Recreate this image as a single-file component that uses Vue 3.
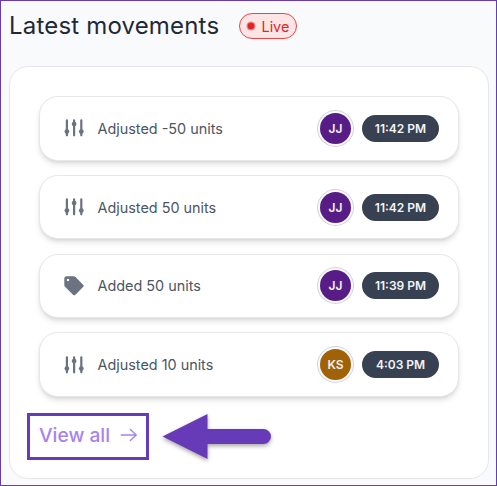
<template>
  <div class="dashboard">
    <header class="heading">
      <h1>Latest movements</h1>
      <span class="live">
        <svg width="10" height="10" viewBox="0 0 10 10">
          <circle cx="5" cy="5" r="4.6" fill="#dc2626" fill-opacity="0.5" />
          <circle cx="5" cy="5" r="3.3" fill="#dc2626" />
        </svg>
        <span>Live</span>
      </span>
    </header>

    <section class="card">
      <ul class="movements">
        <li v-for="movement in movements" :key="movement.id" class="movement">
          <svg v-if="movement.type === 'adjusted'" class="icon" viewBox="0 0 20 20">
            <g fill="none" stroke="#6b7280" stroke-width="2.2" stroke-linecap="round">
              <path d="M2.9 2.3V17.3M10.1 2.3V17.3M17.3 2.3V17.3" />
            </g>
            <g fill="#6b7280">
              <circle cx="2.9" cy="13.6" r="2.4" />
              <circle cx="10.1" cy="6.1" r="2.4" />
              <circle cx="17.3" cy="13.6" r="2.4" />
            </g>
          </svg>
          <svg v-else class="icon" viewBox="0 0 20 20">
            <path
              fill="#6b7280"
              fill-rule="evenodd"
              d="M2.8 0.3H9.8Q10.8 0.3 11.5 1L19.3 8.9Q20.2 9.8 19.3 10.8L11.2 18.9Q10.2 19.8 9.3 18.9L1 10.8Q0.3 10.1 0.3 9.1V2.8Q0.3 0.3 2.8 0.3ZM4 2.8A1.25 1.25 0 1 0 4 5.3A1.25 1.25 0 1 0 4 2.8Z"
            />
          </svg>
          <span class="label">{{ movement.label }}</span>
          <span class="avatar" :style="{ backgroundColor: movement.color }">{{ movement.initials }}</span>
          <span class="time">{{ movement.time }}</span>
        </li>
      </ul>

      <div class="footer">
        <a class="view-all">
          <span>View all</span>
          <svg width="18" height="16" viewBox="0 0 18 16">
            <path
              d="M1.2 8H16.3M10.3 2.5L16.3 8L10.3 13.5"
              fill="none"
              stroke="#a683ee"
              stroke-width="1.4"
              stroke-linecap="round"
              stroke-linejoin="round"
            />
          </svg>
        </a>
        <svg class="pointer" width="110" height="47" viewBox="0 0 110 47">
          <path d="M0.5 23.5L45.5 1V16H101.5A7.5 7.5 0 0 1 101.5 31H45.5V46Z" fill="#673ab7" />
        </svg>
      </div>
    </section>
  </div>
</template>

<script setup>
const movements = [
  { id: 1, type: 'adjusted', label: 'Adjusted -50 units', initials: 'JJ', color: '#581c87', time: '11:42 PM' },
  { id: 2, type: 'adjusted', label: 'Adjusted 50 units', initials: 'JJ', color: '#581c87', time: '11:42 PM' },
  { id: 3, type: 'added', label: 'Added 50 units', initials: 'JJ', color: '#581c87', time: '11:39 PM' },
  { id: 4, type: 'adjusted', label: 'Adjusted 10 units', initials: 'KS', color: '#a16207', time: '4:03 PM' }
]
</script>

<style>
body {
  margin: 0;
}
</style>

<style scoped>
.dashboard {
  box-sizing: border-box;
  width: 497px;
  height: 486px;
  padding: 0 7px 0 8px;
  border: 1px solid #673ab7;
  background: #f9fafb;
  font-family: Inter, "Liberation Sans", sans-serif;
  overflow: hidden;
}

.heading {
  display: flex;
  align-items: center;
  height: 50px;
}

h1 {
  width: 230px;
  margin: 0;
  color: #1f2937;
  font-size: 24px;
  font-weight: 400;
  letter-spacing: 0.18px;
  line-height: 32px;
  white-space: nowrap;
}

.live {
  box-sizing: border-box;
  display: flex;
  align-items: center;
  gap: 6px;
  width: 58px;
  height: 26px;
  padding-left: 5.5px;
  border: 1px solid #ef4444;
  border-radius: 13px;
  background: #fee5e5;
  color: #dc2626;
  font-size: 14.4px;
}

.card {
  box-sizing: border-box;
  height: 413px;
  margin-top: 15px;
  padding: 29.3px 29px 0;
  border: 1px solid #e5e7eb;
  border-radius: 19px;
  background: #fff;
}

.movements {
  display: flex;
  flex-direction: column;
  gap: 14.4px;
  margin: 0;
  padding: 0;
  list-style: none;
}

.movement {
  box-sizing: border-box;
  display: flex;
  align-items: center;
  height: 64.3px;
  padding: 0 19px 0 24px;
  border: 1px solid #e5e7eb;
  border-radius: 19px;
  background: #fff;
  box-shadow: 0 4px 6px -1px rgba(0, 0, 0, 0.12), 0 2px 4px -2px rgba(0, 0, 0, 0.12);
}

.icon {
  width: 20px;
  height: 20px;
}

.label {
  flex: 1;
  margin-left: 13.5px;
  color: #4b5563;
  font-size: 14.4px;
}

.avatar {
  width: 31px;
  height: 31px;
  margin-right: 11px;
  border-radius: 50%;
  box-shadow: 0 0 0 2px #f9fafb, 0 0 0 3px #d1d5db;
  color: #f3f4f6;
  font-size: 12px;
  font-weight: 600;
  line-height: 31px;
  text-align: center;
}

.time {
  width: 77px;
  border-radius: 14px;
  background: #374151;
  color: #f3f4f6;
  font-size: 12px;
  font-weight: 600;
  line-height: 27px;
  text-align: center;
}

.footer {
  display: flex;
  align-items: center;
  margin: 16.3px 0 0 -12px;
}

.view-all {
  box-sizing: border-box;
  display: flex;
  align-items: center;
  gap: 10px;
  width: 122px;
  height: 47px;
  padding: 0 0 2px 9px;
  border: 3px solid #673ab7;
  color: #a683ee;
  font-size: 19.2px;
  font-weight: 500;
  white-space: nowrap;
}

.view-all svg {
  flex: none;
}

.pointer {
  margin-left: 13px;
  overflow: visible;
  filter: drop-shadow(0 2px 2px rgba(0, 0, 0, 0.35));
}
</style>
